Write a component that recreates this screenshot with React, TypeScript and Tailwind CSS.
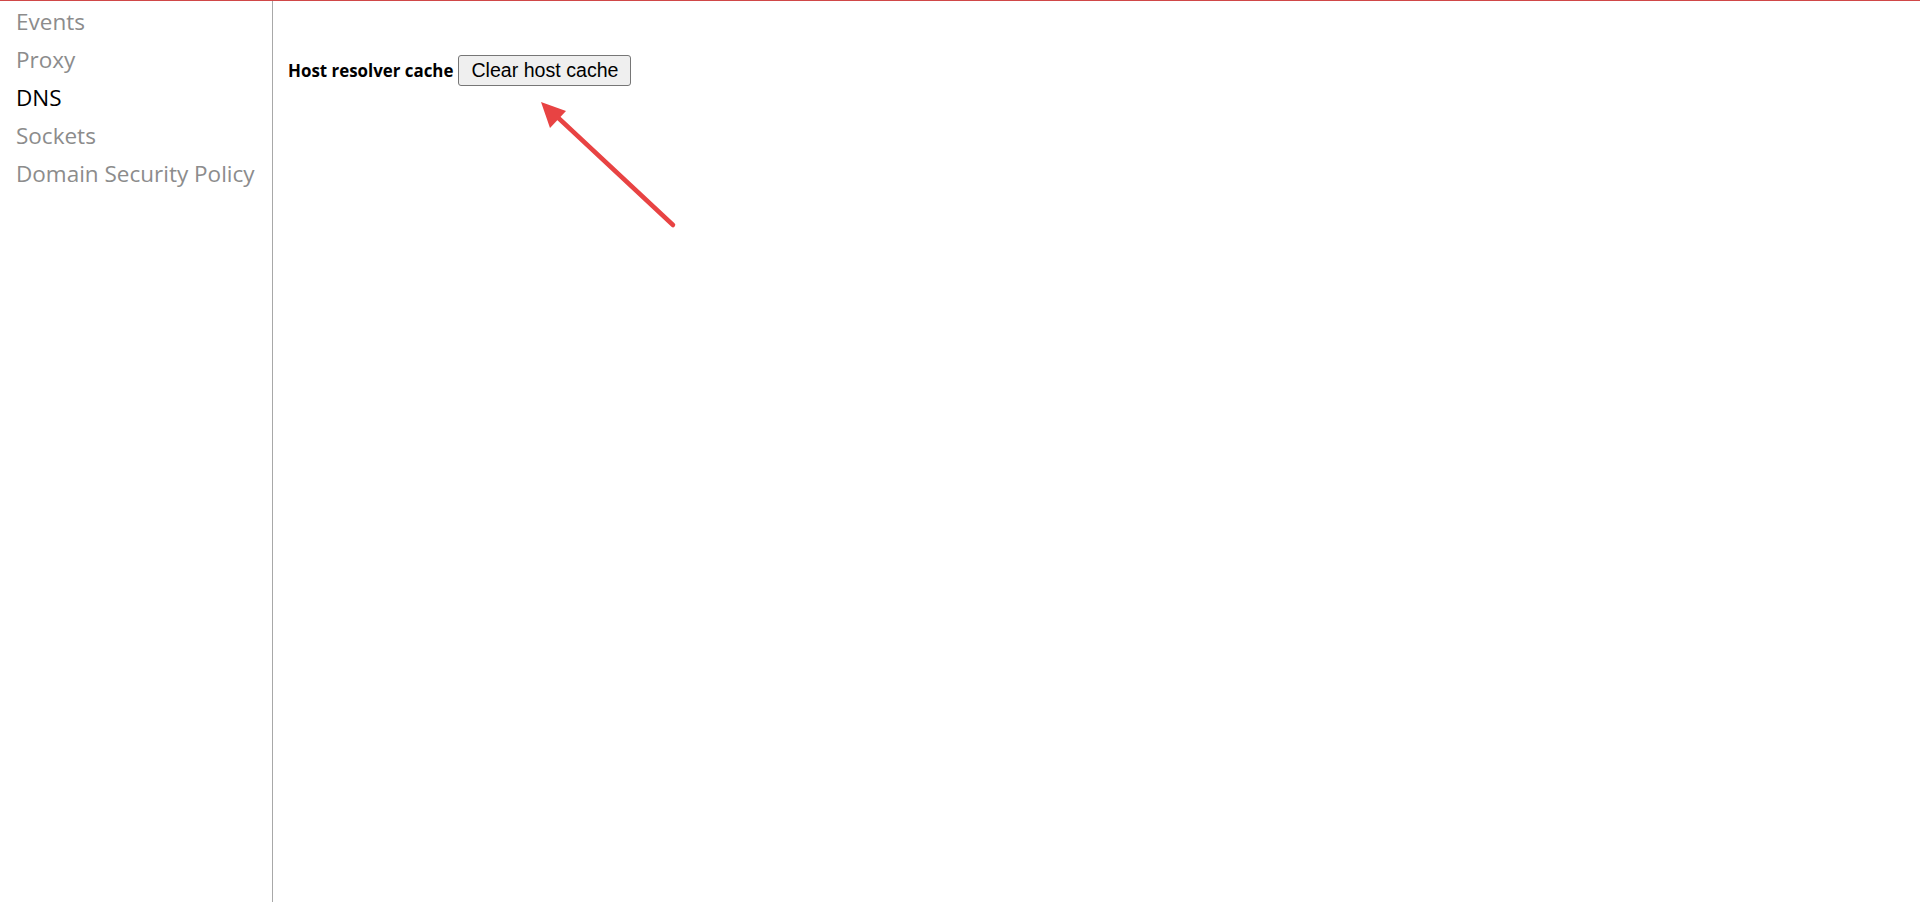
const NAV = ['Events', 'Proxy', 'DNS', 'Sockets', 'Domain Security Policy'];
const ACTIVE = 'DNS';

function Arrow() {
  return (
    <svg className="absolute left-0 top-0 pointer-events-none" width="1920" height="902">
      <line x1="673" y1="224" x2="552" y2="111" stroke="#e84343" strokeWidth="4.5" strokeLinecap="round" />
      <polygon points="541,101 566,110 550,127" fill="#e84343" />
    </svg>
  );
}

export default function App() {
  return (
    <div className="relative w-[1920px] h-[902px] bg-white border-t border-[#d04848] flex">
      <nav className="w-[273px] shrink-0 border-r border-[#a8a8a8] pl-4 pt-[2px] font-['Open_Sans',sans-serif] text-[22.5px]">
        {NAV.map((item) => (
          <div
            key={item}
            className={`leading-[38px] ${item === ACTIVE ? 'text-black' : 'text-[#8c8c8c]'}`}
          >
            {item}
          </div>
        ))}
      </nav>
      <main className="flex-1 pl-[15px] pt-[54px]">
        <div className="flex items-center gap-[5px]">
          <span className="font-['Open_Sans',sans-serif] font-bold text-[16.9px] text-black">
            Host resolver cache
          </span>
          <button className="h-[31px] px-[12px] bg-[#efefef] border border-[#767676] rounded-[3px] font-['Liberation_Sans',Arial,sans-serif] text-[19.6px] text-black leading-none">
            Clear host cache
          </button>
        </div>
      </main>
      <Arrow />
    </div>
  );
}
